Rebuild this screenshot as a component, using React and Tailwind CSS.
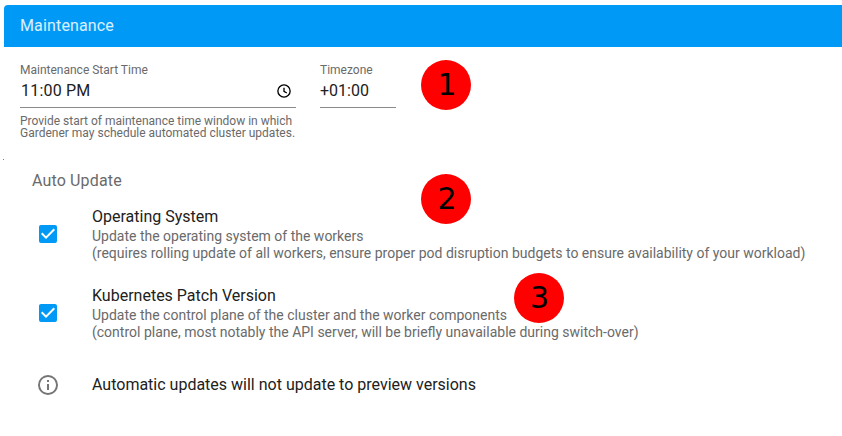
import React from "react";

function Marker({ label, className }) {
  return (
    <div className={`absolute flex h-[50px] w-[50px] items-center justify-center rounded-full bg-[#ff0000] font-['DejaVu_Sans',sans-serif] text-[30px] leading-none text-black ${className}`}>
      {label}
    </div>
  );
}

function Checkbox() {
  return (
    <svg className="block h-6 w-6 text-[#009af6]" viewBox="0 0 24 24" fill="currentColor">
      <path d="M10,17L5,12L6.41,10.58L10,14.17L17.59,6.58L19,8M19,3H5C3.89,3 3,3.89 3,5V19A2,2 0 0,0 5,21H19A2,2 0 0,0 21,19V5C21,3.89 20.1,3 19,3Z" />
    </svg>
  );
}

function Option({ title, lines }) {
  return (
    <div className="flex h-[79px] items-center">
      <div className="w-[60px] pl-1">
        <Checkbox />
      </div>
      <div className="whitespace-nowrap pt-px">
        <div className="mb-[2px] text-base leading-[19px] text-[#212121]">{title}</div>
        {lines.map((line) => (
          <div key={line} className="text-sm leading-[17px] text-[#6a6a6a]">{line}</div>
        ))}
      </div>
    </div>
  );
}

export default function App() {
  return (
    <div className="relative h-[436px] w-[842px] overflow-hidden bg-white pl-1 pt-[5px] font-[Roboto,sans-serif]">
      <header className="flex h-[42px] items-center rounded-tl-[4px] bg-[#009af6] pl-4 text-base tracking-[0.15px] text-white/85">
        Maintenance
      </header>
      <div className="flex h-[113px] items-start gap-6 pl-4 pt-[15px]">
        <div className="w-[276px]">
          <div className="text-xs leading-4 text-[#6a6a6a]">Maintenance Start Time</div>
          <div className="flex h-[30px] items-start justify-between border-b border-[#8a8a8a] pl-px pt-px text-base leading-6 text-[#212121]">
            <span className="tracking-[0.2px]">11:00 PM</span>
            <svg className="mr-1 mt-1 h-4 w-4" viewBox="0 0 24 24" fill="none" stroke="#000" strokeWidth="2">
              <circle cx="12" cy="12" r="9.2" />
              <path d="M12 7v5.5l4.2 2.5" />
            </svg>
          </div>
          <p className="mt-[7px] whitespace-nowrap text-xs leading-3 text-[#6a6a6a]">
            Provide start of maintenance time window in which
            <br />
            Gardener may schedule automated cluster updates.
          </p>
        </div>
        <div className="w-[76px]">
          <div className="text-xs leading-4 text-[#6a6a6a]">Timezone</div>
          <div className="h-[30px] border-b border-[#8a8a8a] pt-px text-base leading-6 text-[#212121]">+01:00</div>
        </div>
      </div>
      <section className="pl-7">
        <h2 className="h-[34px] pt-[9px] text-base leading-6 tracking-[0.15px] text-[#6a6a6a]">Auto Update</h2>
        <Option
          title="Operating System"
          lines={[
            "Update the operating system of the workers",
            "(requires rolling update of all workers, ensure proper pod disruption budgets to ensure availability of your workload)",
          ]}
        />
        <Option
          title="Kubernetes Patch Version"
          lines={[
            "Update the control plane of the cluster and the worker components",
            "(control plane, most notably the API server, will be briefly unavailable during switch-over)",
          ]}
        />
        <div className="mt-px flex h-16 items-center">
          <div className="w-[60px] pl-1">
            <svg className="block h-6 w-6" viewBox="0 0 24 24" fill="#757575">
              <path d="M11,9H13V7H11M12,20C7.59,20 4,16.41 4,12C4,7.59 7.59,4 12,4C16.41,4 20,7.59 20,12C20,16.41 16.41,20 12,20M12,2A10,10 0 0,0 2,12A10,10 0 0,0 12,22A10,10 0 0,0 22,12A10,10 0 0,0 12,2M11,17H13V11H11V17Z" />
            </svg>
          </div>
          <div className="text-base leading-5 text-[#212121]">Automatic updates will not update to preview versions</div>
        </div>
      </section>
      <div className="absolute left-[3px] top-[159px] h-px w-px bg-[#3f8fb5]" />
      <Marker label="1" className="left-[421px] top-[60px] pl-[2px]" />
      <Marker label="2" className="left-[421px] top-[174px] pl-[2px]" />
      <Marker label="3" className="left-[514px] top-[273px] pl-px" />
    </div>
  );
}
